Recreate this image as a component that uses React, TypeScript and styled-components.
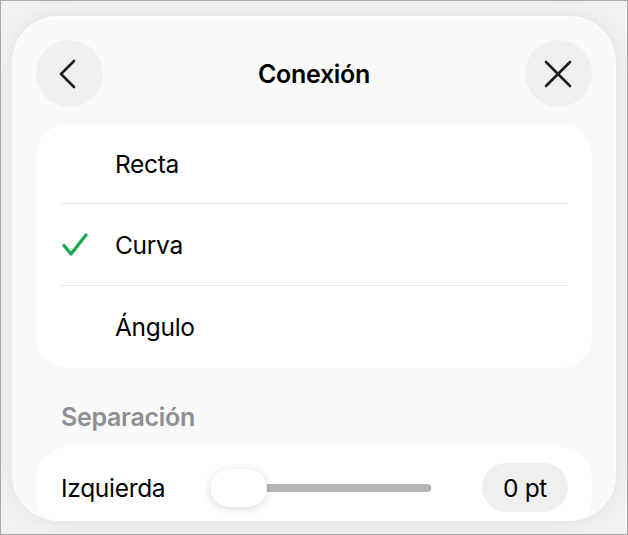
import React from "react";
import styled, { createGlobalStyle } from "styled-components";

const GlobalStyle = createGlobalStyle`
  * { box-sizing: border-box; }
  body {
    margin: 0;
    background: #f2f2f2;
    font-family: Inter, "Noto Sans", sans-serif;
    color: #000;
  }
`;

const Screen = styled.div`
  width: 628px;
  height: 535px;
  border: 1px solid #a9a9a9;
  background: #f1f1f1;
  padding: 15px 11px 0;
  overflow: hidden;
`;

const Panel = styled.div`
  width: 604px;
  height: 505px;
  background: #f9f9f8;
  border: 1px solid #ffffff;
  border-radius: 46px;
  box-shadow: 0 0 22px rgba(0, 0, 0, 0.07);
  padding: 23px 23px 0;
  overflow: hidden;
`;

const Header = styled.div`
  display: flex;
  align-items: center;
  justify-content: space-between;
  height: 67px;
`;

const RoundButton = styled.button`
  width: 67px;
  height: 67px;
  border-radius: 50%;
  border: none;
  background: #efefef;
  display: flex;
  align-items: center;
  justify-content: center;
  padding: 0;
`;

const Title = styled.h1`
  margin: 0;
  font-size: 25px;
  font-weight: 600;
  letter-spacing: -0.3px;
`;

const Card = styled.div`
  background: #ffffff;
  border-radius: 32px;
  padding: 0 25px;
`;

const ListCard = styled(Card)`
  margin-top: 17px;
`;

const Row = styled.div<{ $last?: boolean; $h: number }>`
  display: flex;
  align-items: center;
  height: ${(p) => p.$h}px;
  border-bottom: ${(p) => (p.$last ? "none" : "1.5px solid #e6e6e8")};
  font-size: 24.5px;
  letter-spacing: -0.3px;
`;

const CheckSlot = styled.span`
  width: 54px;
  display: flex;
  align-items: center;
`;

const SectionLabel = styled.div`
  margin: 36px 0 17px 25px;
  font-size: 25px;
  font-weight: 600;
  color: #8e8e93;
  line-height: 26px;
  letter-spacing: -0.3px;
`;

const SliderCard = styled(Card)`
  padding: 16px 24px 16px 25px;
`;

const SliderRow = styled.div`
  display: flex;
  align-items: center;
  height: 49px;
  font-size: 24.5px;
  letter-spacing: -0.3px;
`;

const SliderLabel = styled.span`
  width: 149px;
`;

const Slider = styled.div`
  position: relative;
  width: 221px;
  height: 38px;
  display: flex;
  align-items: center;
`;

const Track = styled.div`
  width: 100%;
  height: 8px;
  border-radius: 4px;
  background: #b4b4b4;
`;

const Thumb = styled.div`
  position: absolute;
  left: 0;
  top: 0;
  width: 57px;
  height: 38px;
  border-radius: 19px;
  background: #ffffff;
  box-shadow: 0 2px 8px rgba(0, 0, 0, 0.14), 0 0 1px rgba(0, 0, 0, 0.08);
`;

const ValuePill = styled.div`
  margin-left: auto;
  width: 86px;
  height: 49px;
  border-radius: 25px;
  background: #efeff0;
  display: flex;
  align-items: center;
  justify-content: center;
`;

const options = [
  { label: "Recta", checked: false, h: 80 },
  { label: "Curva", checked: true, h: 82 },
  { label: "Ángulo", checked: false, h: 82 },
];

const App: React.FC = () => (
  <>
    <GlobalStyle />
    <Screen>
      <Panel>
        <Header>
          <RoundButton aria-label="Atrás">
            <svg width="24" height="32" viewBox="0 0 24 32" fill="none">
              <path d="M16 3 L3 16 L16 29" stroke="#1c1c1e" strokeWidth="2.6" strokeLinecap="round" strokeLinejoin="round" />
            </svg>
          </RoundButton>
          <Title>Conexión</Title>
          <RoundButton aria-label="Cerrar">
            <svg width="28" height="28" viewBox="0 0 28 28" fill="none">
              <path d="M2 2 L26 26 M26 2 L2 26" stroke="#1c1c1e" strokeWidth="2.6" strokeLinecap="round" />
            </svg>
          </RoundButton>
        </Header>

        <ListCard>
          {options.map((o, i) => (
            <Row key={o.label} $h={o.h} $last={i === options.length - 1}>
              <CheckSlot>
                {o.checked && (
                  <svg width="28" height="24" viewBox="0 0 28 24" fill="none">
                    <path d="M3 12.5 L10 21 L25 2" stroke="#17a84b" strokeWidth="3.2" strokeLinecap="round" strokeLinejoin="round" />
                  </svg>
                )}
              </CheckSlot>
              {o.label}
            </Row>
          ))}
        </ListCard>

        <SectionLabel>Separación</SectionLabel>

        <SliderCard>
          <SliderRow>
            <SliderLabel>Izquierda</SliderLabel>
            <Slider>
              <Track />
              <Thumb />
            </Slider>
            <ValuePill>0 pt</ValuePill>
          </SliderRow>
        </SliderCard>
      </Panel>
    </Screen>
  </>
);

export default App;
